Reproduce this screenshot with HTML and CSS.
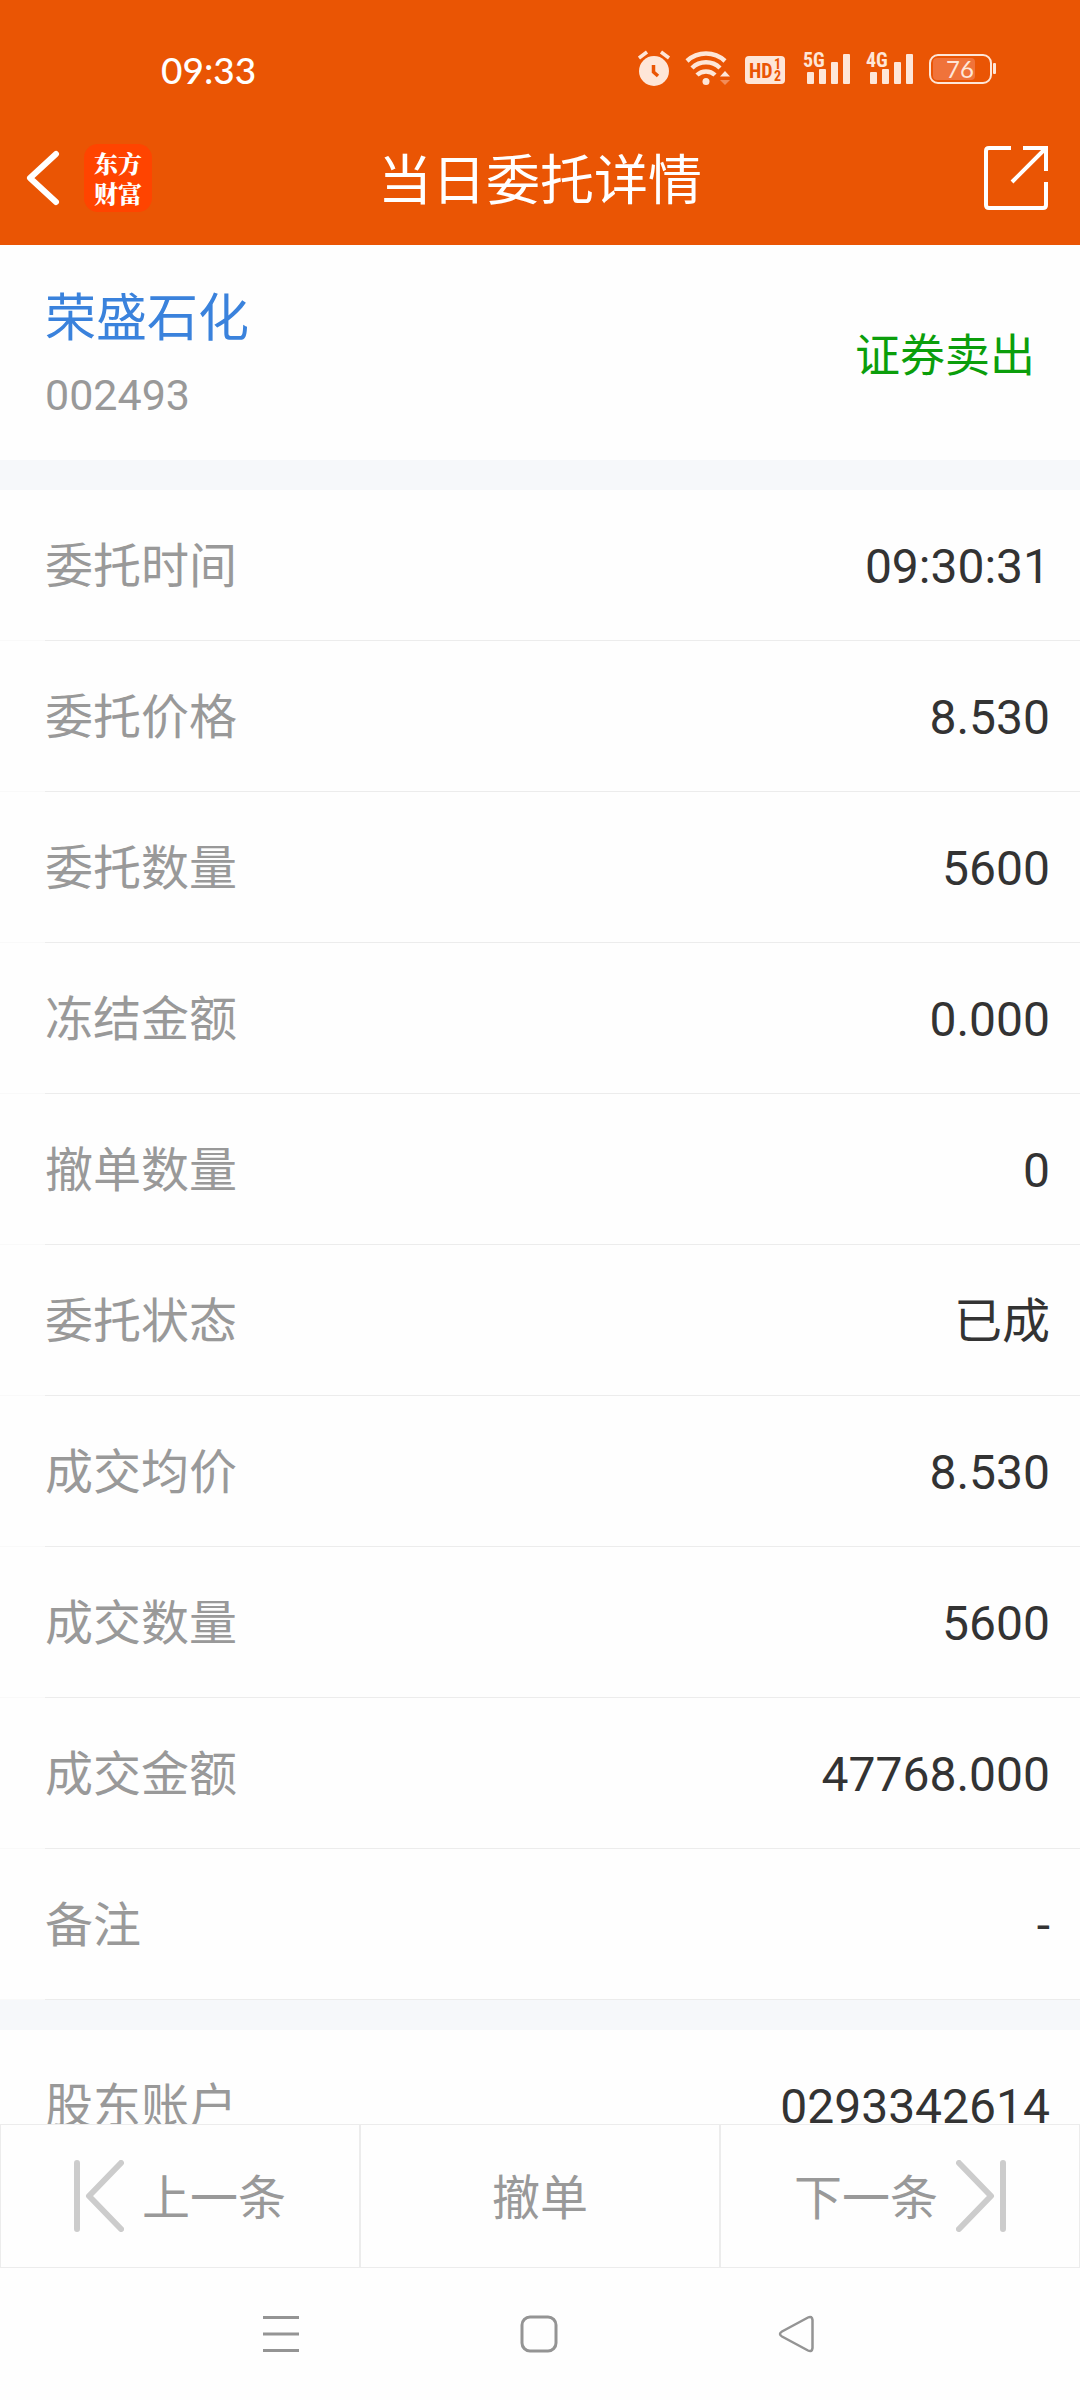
FILE: index.html
```html
<!DOCTYPE html>
<html lang="zh-CN">
<head>
<meta charset="utf-8">
<meta name="viewport" content="width=device-width, initial-scale=1">
<title>当日委托详情</title>
<link rel="stylesheet" href="styles.css">
</head>
<body>
<div class="app">
  <header class="header">
    <div class="status">
      <time class="clock">09:33</time>
      <svg class="status-icons" width="360" height="40" viewBox="0 1 360 40" aria-hidden="true">
        <g fill="#fee6d8">
          <circle cx="16" cy="23" r="15"/>
          <path d="M1 10L9 4M31 10L23 4" stroke="#fee6d8" stroke-width="3.500"/>
          <path d="M15.500 17V24L20 28" fill="none" stroke="#ea5504" stroke-width="3.500"/>
          <g fill="none" stroke="#fee6d8" stroke-width="4.500">
            <path d="M49 13A28 28 0 0 1 87 13"/>
            <path d="M54 20A20 20 0 0 1 82 20"/>
            <path d="M59 27A13 13 0 0 1 77 27"/>
          </g>
          <circle cx="68" cy="33.500" r="3.500"/>
          <path d="M82 28.500L87 23L92 28.500Z"/>
          <path d="M82 32L87 37L92 32Z" fill="#f28c59"/>
          <rect x="107" y="8" width="40" height="28" rx="4"/>
          <rect x="169" y="24" width="7" height="12" rx="1"/>
          <rect x="181" y="21" width="7" height="15" rx="1"/>
          <rect x="193" y="14" width="7" height="22" rx="1"/>
          <rect x="205" y="6" width="7" height="30" rx="1"/>
          <rect x="232" y="24" width="7" height="12" rx="1"/>
          <rect x="244" y="21" width="7" height="15" rx="1"/>
          <rect x="256" y="14" width="7" height="22" rx="1"/>
          <rect x="268" y="6" width="7" height="30" rx="1"/>
          <rect x="355" y="15" width="3" height="11" rx="1"/>
        </g>
        <rect x="292" y="7" width="61" height="28" rx="8" fill="none" stroke="#fee6d8" stroke-width="2"/>
        <rect x="295" y="10" width="42" height="22" rx="4" fill="#f0733a"/>
        <g class="glyphs">
          <text x="111" y="30" class="g-hd">HD</text>
          <text x="136" y="21" class="g-sim">1</text>
          <text x="136" y="33" class="g-sim">2</text>
          <text x="165" y="19" class="g-net">5G</text>
          <text x="228" y="19" class="g-net">4G</text>
          <text x="308" y="30" class="g-bat">76</text>
        </g>
      </svg>
    </div>
    <div class="titlebar">
      <div class="side">
        <button class="icon-btn" type="button" aria-label="返回">
          <svg width="34" height="56" viewBox="0 0 34 56"><path d="M30 4L4 28L30 52" fill="none" stroke="#fff" stroke-width="6" stroke-linecap="round" stroke-linejoin="round"/></svg>
        </button>
        <span class="logo">东方<br>财富</span>
      </div>
      <h1 class="title">当日委托详情</h1>
      <div class="side side-end">
        <button class="icon-btn" type="button" aria-label="分享">
          <svg width="64" height="64" viewBox="0 0 64 64"><path d="M27 2H5Q2 2 2 5V59Q2 62 5 62H59Q62 62 62 59V36M39 2H62V25M61 3L28 36" fill="none" stroke="#fff" stroke-width="4"/></svg>
        </button>
      </div>
    </div>
  </header>

  <main class="content">
    <section class="summary">
      <div>
        <a class="stock" href="#">荣盛石化</a>
        <div class="code">002493</div>
      </div>
      <span class="side-sell">证券卖出</span>
    </section>
    <dl class="list">
      <div class="row"><dt>委托时间</dt><dd>09:30:31</dd></div>
      <div class="row"><dt>委托价格</dt><dd>8.530</dd></div>
      <div class="row"><dt>委托数量</dt><dd>5600</dd></div>
      <div class="row"><dt>冻结金额</dt><dd>0.000</dd></div>
      <div class="row"><dt>撤单数量</dt><dd>0</dd></div>
      <div class="row"><dt>委托状态</dt><dd class="word">已成</dd></div>
      <div class="row"><dt>成交均价</dt><dd>8.530</dd></div>
      <div class="row"><dt>成交数量</dt><dd>5600</dd></div>
      <div class="row"><dt>成交金额</dt><dd>47768.000</dd></div>
      <div class="row"><dt>备注</dt><dd>-</dd></div>
    </dl>
    <dl class="list">
      <div class="row"><dt>股东账户</dt><dd>0293342614</dd></div>
    </dl>
  </main>

  <div class="actions">
    <button class="action" type="button">
      <svg width="50" height="72" viewBox="0 0 50 72"><path d="M3 3V69M47 3L15 36L47 69" fill="none" stroke="#ccc" stroke-width="6" stroke-linecap="round" stroke-linejoin="round"/></svg>
      <span>上一条</span>
    </button>
    <button class="action" type="button"><span>撤单</span></button>
    <button class="action" type="button">
      <span>下一条</span>
      <svg width="50" height="72" viewBox="0 0 50 72"><path d="M47 3V69M3 3L35 36L3 69" fill="none" stroke="#ccc" stroke-width="6" stroke-linecap="round" stroke-linejoin="round"/></svg>
    </button>
  </div>

  <nav class="sysnav" aria-label="系统导航">
    <button class="icon-btn" type="button" aria-label="最近任务">
      <svg width="38" height="38" viewBox="0 0 38 38"><path d="M1 2.500H37M1 19H37M1 35.500H37" stroke="#949494" stroke-width="3"/></svg>
    </button>
    <button class="icon-btn" type="button" aria-label="主屏幕">
      <svg width="38" height="38" viewBox="0 0 38 38"><rect x="2" y="2" width="34" height="34" rx="8" fill="none" stroke="#949494" stroke-width="3"/></svg>
    </button>
    <button class="icon-btn" type="button" aria-label="后退">
      <svg width="38" height="38" viewBox="0 0 38 38"><path d="M30 2.500Q34 .500 34.500 5V33Q34 37.500 30 35.500L4 21.500Q0 19 4 16.500Z" fill="none" stroke="#949494" stroke-width="2.500"/></svg>
    </button>
  </nav>
</div>
</body>
</html>
```
FILE: styles.css
```css
* { box-sizing: border-box; }

body,
h1,
dl,
dd {
  margin: 0;
}

body {
  background: #fefefe;
  color: #333;
  font-family: Roboto, "Noto Sans CJK SC", sans-serif;
  font-size: 48px;
}

button {
  margin: 0;
  padding: 0;
  border: 0;
  background: none;
  color: inherit;
  font: inherit;
}

svg { display: block; }

.app {
  display: flex;
  flex-direction: column;
  height: 100vh;
}

.header {
  flex: none;
  padding-bottom: 28px;
  background: #ea5504;
  color: #fff;
}

.status {
  display: flex;
  align-items: center;
  justify-content: space-between;
  height: 138px;
  padding: 0 82px 0 161px;
}

.clock {
  font-family: Lato, sans-serif;
  font-size: 37px;
  font-weight: 500;
}

.glyphs {
  fill: #fee6d8;
  font-family: "Roboto Condensed", "Liberation Sans Narrow", Roboto, sans-serif;
}

.g-hd {
  fill: #ea5504;
  font-size: 20px;
  font-weight: 700;
}

.g-sim {
  fill: #ea5504;
  font-size: 14px;
  font-weight: 700;
}

.g-net {
  font-size: 20px;
  font-weight: 700;
}

.g-bat {
  font-family: Lato, sans-serif;
  font-size: 24px;
}

.titlebar {
  display: flex;
  align-items: center;
  height: 79px;
  padding: 0 32px 0 26px;
}

.side {
  display: flex;
  flex: 1;
  align-items: center;
  gap: 24px;
}

.side-end { justify-content: flex-end; }

.logo {
  padding: 4px 10px;
  border-radius: 14px;
  background: #ff4400;
  font-family: "Noto Serif CJK SC", "Noto Sans CJK SC", sans-serif;
  font-size: 24px;
  font-weight: 900;
  line-height: 30px;
}

.title {
  padding: 8px 0 0 6px;
  font-size: 54px;
  font-weight: 400;
  line-height: 71px;
}

.content {
  flex: 1;
  min-height: 0;
  overflow: hidden;
}

.summary {
  display: flex;
  align-items: center;
  justify-content: space-between;
  height: 215px;
  padding: 0 45px;
}

.stock {
  display: block;
  padding-top: 8px;
  color: #3a82dc;
  font-size: 51px;
  line-height: 76px;
  text-decoration: none;
}

.code {
  color: #999;
  font-size: 43px;
  line-height: 76px;
}

.side-sell {
  color: #0b9e0b;
  font-size: 45px;
}

.list { border-top: 30px solid #f6f8fa; }

.row {
  position: relative;
  display: flex;
  align-items: center;
  justify-content: space-between;
  height: 151px;
  padding: 2px 30px 0 45px;
  border-bottom: 1px solid #f9f9f9;
}

.row::after {
  position: absolute;
  right: 0;
  bottom: -1px;
  left: 45px;
  height: 1px;
  background: #ececec;
  content: "";
}

.row dt { color: #999; }

.row dt,
.row .word {
  padding-bottom: 8px;
}

.actions {
  display: grid;
  flex: none;
  grid-template-columns: repeat(3, 1fr);
}

.action {
  display: flex;
  align-items: center;
  justify-content: center;
  gap: 18px;
  height: 144px;
  border: 1px solid #ececec;
  color: #999;
}

.action span { padding-bottom: 4px; }

.sysnav {
  display: flex;
  flex: none;
  align-items: center;
  justify-content: center;
  gap: 220px;
  height: 132px;
  padding-right: 2px;
}
```
